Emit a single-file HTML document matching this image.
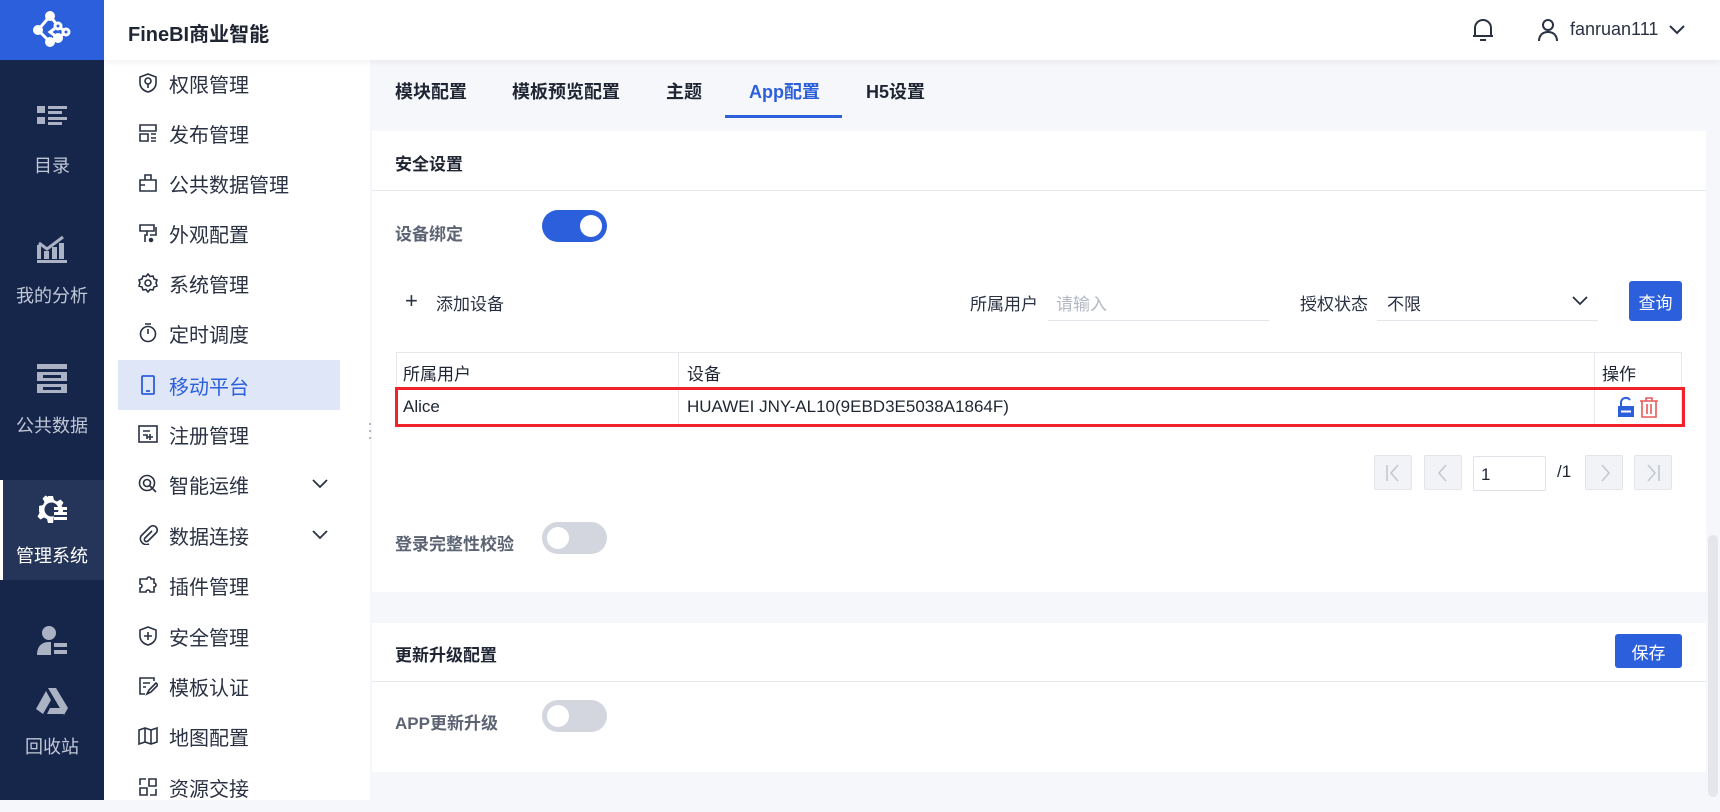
<!DOCTYPE html>
<html><head><meta charset="utf-8">
<style>
*{margin:0;padding:0;box-sizing:border-box}
body{width:1720px;height:800px;overflow:hidden;background:#f6f7fa;font-family:"Liberation Sans","Noto Sans CJK SC",sans-serif;color:#1f2533;position:relative}
.a{position:absolute}
.nav{left:0;top:0;width:104px;height:800px;background:#16254a}
.logo{left:0;top:0;width:104px;height:60px;background:#2b5fdc}
.ni{color:#c0c7d6;font-size:18px;width:104px;text-align:center}
.hdr{left:104px;top:0;width:1616px;height:60px;background:#fff;box-shadow:0 2px 6px rgba(0,0,0,.06);z-index:2}
.menu{left:104px;top:60px;width:266px;height:740px;background:#fff}
.mi{left:0;width:266px;height:50px;font-size:20px;color:#2a3142;display:flex;align-items:center}
.mi svg{position:absolute;left:34px}
.mi span{position:absolute;left:65px}
.tab{top:78px;font-size:18px;font-weight:bold;color:#1f2533}
.panel{background:#fff;left:372px;width:1334px}
.lbl{font-size:17px;color:#5c6373;font-weight:bold}
.tg{width:65px;height:32px;border-radius:16px;background:#d3d6de}
.tg::after{content:"";position:absolute;left:5px;top:5px;width:22px;height:22px;border-radius:50%;background:#fff}
.tg.on{background:#2b5fdc}.tg.on::after{left:38px}
.btn{background:#2b5fdc;color:#fff;font-size:17px;border-radius:3px;display:flex;align-items:center;justify-content:center}
.pg{width:38px;height:35px;border:1px solid #e3e5ea;background:#f1f3f6;border-radius:2px}
.t17{font-size:17px}
</style></head><body>
<div class="a nav"></div>
<div class="a logo"><svg class="a" style="left:30px;top:8px" width="44" height="44" viewBox="0 0 44 44" fill="none" stroke="#fff" stroke-width="3"><path d="M20 8 L8 22 L20 34 M20 8 L28 18 L20 24 L28 30 M28 18 L36 24 L28 30"/><circle cx="20" cy="8" r="3.5" fill="#fff"/><circle cx="8" cy="22" r="3.5" fill="#fff"/><circle cx="20" cy="34" r="3.5" fill="#fff"/><circle cx="28" cy="18" r="3" fill="#2b5fdc"/><circle cx="36" cy="24" r="3" fill="#2b5fdc"/><circle cx="28" cy="30" r="3.5" fill="#fff"/></svg></div>
<svg class="a" style="left:37px;top:106px" width="30" height="26" viewBox="0 0 30 26" fill="#aab2c3"><rect x="0" y="0" width="8" height="7"/><rect x="11" y="0" width="19" height="3"/><rect x="11" y="5" width="14" height="3"/><rect x="0" y="11" width="8" height="7"/><rect x="11" y="11" width="19" height="3"/><rect x="11" y="16" width="14" height="3"/></svg>
<div class="a ni" style="top:152px">目录</div>
<svg class="a" style="left:37px;top:235px" width="30" height="28" viewBox="0 0 30 28" fill="#aab2c3"><path d="M0 10h4v14H0zM7 16h5v8H7zM15 12h5v12h-5zM22 8h5v16h-5zM0 25h30v3H0z"/><path d="M2 8l8 6 8-6 8-6" stroke="#aab2c3" stroke-width="3" fill="none"/></svg>
<div class="a ni" style="top:282px">我的分析</div>
<svg class="a" style="left:37px;top:364px" width="30" height="30" viewBox="0 0 30 30" fill="#aab2c3"><rect x="0" y="0" width="30" height="5"/><rect x="0" y="8" width="30" height="9"/><rect x="0" y="20" width="30" height="9"/><rect x="6" y="11" width="18" height="3" fill="#16254a"/><rect x="6" y="23" width="18" height="3" fill="#16254a"/></svg>
<div class="a ni" style="top:412px">公共数据</div>
<div class="a" style="left:0;top:480px;width:104px;height:100px;background:#253559;border-left:3px solid #fff"></div>
<svg class="a" style="left:37px;top:495px" width="30" height="30" viewBox="0 0 30 30" fill="#fff"><path d="M11 1h5l1 4 3 1.5 3.5-2 3 3-2 3.5L26 13v4h-5a7 7 0 10-4 4v-1l-1 8h-5l-1-4-3-1.5-3.5 2-3-3 2-3.5L2 16v-5l4-1 1.5-3-2-3.5 3-3 3.5 2L11 3z"/><rect x="17" y="12" width="13" height="3"/><rect x="17" y="17" width="13" height="3"/><rect x="17" y="22" width="13" height="3"/></svg>
<div class="a ni" style="top:542px;color:#fff">管理系统</div>
<svg class="a" style="left:37px;top:625px" width="30" height="30" viewBox="0 0 30 30" fill="#aab2c3"><circle cx="12" cy="8" r="7"/><path d="M0 30c0-9 5-13 12-13h2v13z"/><rect x="17" y="18" width="13" height="4"/><rect x="17" y="25" width="13" height="4"/></svg>
<svg class="a" style="left:36px;top:688px" width="32" height="28" viewBox="0 0 32 28" fill="#aab2c3"><path d="M12 0h8l12 20-4 7zM10 3l5 9-8 14-7-5z"/><path d="M14 20h16l-3 6H11z"/></svg>
<div class="a ni" style="top:733px">回收站</div>

<div class="a hdr">
<div class="a" style="left:24px;top:18px;font-size:20px;font-weight:bold">FineBI商业智能</div>
<svg class="a" style="left:1368px;top:18px" width="22" height="24" viewBox="0 0 22 24" fill="none" stroke="#2a3142" stroke-width="2"><path d="M3 18V10a8 8 0 0116 0v8zM1 18h20M8 22h6"/></svg>
<svg class="a" style="left:1434px;top:19px" width="20" height="22" viewBox="0 0 20 22" fill="none" stroke="#2a3142" stroke-width="2"><circle cx="10" cy="6" r="5"/><path d="M1 22c0-6 4-9 9-9s9 3 9 9"/></svg>
<div class="a" style="left:1466px;top:19px;font-size:18px;color:#2a3142">fanruan111</div>
<svg class="a" style="left:1564px;top:24px" width="18" height="12" viewBox="0 0 18 12" fill="none" stroke="#2a3142" stroke-width="2"><path d="M2 2l7 7 7-7"/></svg>
</div>

<div class="a menu">
<div class="a" style="left:14px;top:300px;width:222px;height:50px;background:#dfe6f8"></div>
<div class="a mi" style="top:-2px"><svg width="20" height="20" viewBox="0 0 20 20" fill="none" stroke="#2a3142" stroke-width="1.6"><path d="M10 1l8 3v6c0 5-4 8-8 9-4-1-8-4-8-9V4z"/><circle cx="10" cy="8" r="3"/><path d="M10 11v4"/></svg><span>权限管理</span></div>
<div class="a mi" style="top:48px"><svg width="20" height="20" viewBox="0 0 20 20" fill="none" stroke="#2a3142" stroke-width="1.6"><path d="M2 2h16v6H2zM2 11h8v7H2zM13 11h5M13 15h5M13 18h5"/></svg><span>发布管理</span></div>
<div class="a mi" style="top:98px"><svg width="20" height="20" viewBox="0 0 20 20" fill="none" stroke="#2a3142" stroke-width="1.6"><path d="M2 7h16v11H2zM7 7V2h6v5M2 12h5"/></svg><span>公共数据管理</span></div>
<div class="a mi" style="top:148px"><svg width="20" height="20" viewBox="0 0 20 20" fill="none" stroke="#2a3142" stroke-width="1.6"><path d="M2 2h14v6H2zM9 8v4H7v7M18 4v8h-6"/><circle cx="13" cy="17" r="1.5" fill="#2a3142"/></svg><span>外观配置</span></div>
<div class="a mi" style="top:198px"><svg width="20" height="20" viewBox="0 0 20 20" fill="none" stroke="#2a3142" stroke-width="1.6"><path d="M10 1l2 2.5 3-.5 1 3 3 1-1 3 1 3-3 1-1 3-3-.5L10 19l-2-2.5-3 .5-1-3-3-1 1-3-1-3 3-1 1-3 3 .5z"/><circle cx="10" cy="10" r="3"/></svg><span>系统管理</span></div>
<div class="a mi" style="top:248px"><svg width="20" height="20" viewBox="0 0 20 20" fill="none" stroke="#2a3142" stroke-width="1.6"><circle cx="10" cy="11" r="7.5"/><path d="M7 1h6M10 6v5"/></svg><span>定时调度</span></div>
<div class="a mi" style="top:300px;color:#2b5fdc"><svg width="20" height="20" viewBox="0 0 20 20" fill="none" stroke="#2b5fdc" stroke-width="1.8"><rect x="4" y="1" width="12" height="18" rx="1"/><path d="M8 16h4"/></svg><span>移动平台</span></div>
<div class="a mi" style="top:349px"><svg width="20" height="20" viewBox="0 0 20 20" fill="none" stroke="#2a3142" stroke-width="1.6"><rect x="1" y="2" width="18" height="16"/><path d="M5 7h7M5 11h4v4M12 10v6M9 13h6"/></svg><span>注册管理</span></div>
<div class="a mi" style="top:399px"><svg width="20" height="20" viewBox="0 0 20 20" fill="none" stroke="#2a3142" stroke-width="1.6"><circle cx="9" cy="9" r="7.5"/><circle cx="9" cy="9" r="3.5"/><path d="M11 11l7 7"/></svg><span>智能运维</span><svg style="left:208px" width="16" height="10" viewBox="0 0 16 10" fill="none" stroke="#2a3142" stroke-width="1.8"><path d="M1 1l7 7 7-7"/></svg></div>
<div class="a mi" style="top:450px"><svg width="20" height="20" viewBox="0 0 20 20" fill="none" stroke="#2a3142" stroke-width="1.6"><path d="M14 6l-7 7a2 2 0 003 3l8-8a4 4 0 00-6-6L3 11a6 6 0 008 8"/></svg><span>数据连接</span><svg style="left:208px" width="16" height="10" viewBox="0 0 16 10" fill="none" stroke="#2a3142" stroke-width="1.8"><path d="M1 1l7 7 7-7"/></svg></div>
<div class="a mi" style="top:500px"><svg width="20" height="20" viewBox="0 0 20 20" fill="none" stroke="#2a3142" stroke-width="1.6"><path d="M6 4h3a2 2 0 014 0h3v4a2 2 0 010 4v5H12a2 2 0 00-4 0H2v-4a2 2 0 000-4V4z"/></svg><span>插件管理</span></div>
<div class="a mi" style="top:551px"><svg width="20" height="20" viewBox="0 0 20 20" fill="none" stroke="#2a3142" stroke-width="1.6"><path d="M10 1l8 3v6c0 5-4 8-8 9-4-1-8-4-8-9V4z"/><path d="M6 10h8M10 6v8"/></svg><span>安全管理</span></div>
<div class="a mi" style="top:601px"><svg width="20" height="20" viewBox="0 0 20 20" fill="none" stroke="#2a3142" stroke-width="1.6"><path d="M16 5V2H2v16h5M5 7h7M5 11h3"/><path d="M9 18l2-4 7-7 2 2-7 7z"/></svg><span>模板认证</span></div>
<div class="a mi" style="top:651px"><svg width="20" height="20" viewBox="0 0 20 20" fill="none" stroke="#2a3142" stroke-width="1.6"><path d="M1 4l6-2 6 2 6-2v14l-6 2-6-2-6 2zM7 2v14M13 4v14"/></svg><span>地图配置</span></div>
<div class="a mi" style="top:702px"><svg width="20" height="20" viewBox="0 0 20 20" fill="none" stroke="#2a3142" stroke-width="1.6"><path d="M11 2h7v7h-7zM2 11h7v7H2zM2 8V2h6M18 12v6h-6"/></svg><span>资源交接</span></div>
</div>

<svg class="a" style="left:368px;top:422px" width="10" height="18" viewBox="0 0 10 18" fill="#9aa0ad"><circle cx="2" cy="2" r="1"/><circle cx="8" cy="2" r="1"/><circle cx="2" cy="9" r="1"/><circle cx="8" cy="9" r="1"/><circle cx="2" cy="16" r="1"/><circle cx="8" cy="16" r="1"/></svg>

<div class="a tab" style="left:395px">模块配置</div>
<div class="a tab" style="left:512px">模板预览配置</div>
<div class="a tab" style="left:666px">主题</div>
<div class="a tab" style="left:749px;color:#2b5fdc">App配置</div>
<div class="a tab" style="left:866px">H5设置</div>
<div class="a" style="left:725px;top:115px;width:117px;height:3px;background:#2b5fdc"></div>

<div class="a panel" style="top:131px;height:461px"></div>
<div class="a" style="left:395px;top:150px;font-size:17px;font-weight:bold">安全设置</div>
<div class="a" style="left:372px;top:190px;width:1334px;height:1px;background:#e6e8ec"></div>
<div class="a lbl" style="left:395px;top:220px">设备绑定</div>
<div class="a tg on" style="left:542px;top:210px"></div>
<div class="a t17" style="left:405px;top:288px;font-size:22px;color:#2a3142">+</div>
<div class="a t17" style="left:436px;top:290px;color:#2a3142">添加设备</div>
<div class="a t17" style="left:970px;top:290px;color:#2a3142">所属用户</div>
<div class="a" style="left:1048px;top:282px;width:221px;height:39px;border-bottom:1px solid #e3e5ea"></div>
<div class="a t17" style="left:1056px;top:290px;color:#b3b8c3">请输入</div>
<div class="a t17" style="left:1300px;top:290px;color:#2a3142">授权状态</div>
<div class="a" style="left:1377px;top:282px;width:221px;height:39px;border-bottom:1px solid #e3e5ea"></div>
<div class="a t17" style="left:1387px;top:290px;color:#2a3142">不限</div>
<svg class="a" style="left:1572px;top:296px" width="16" height="10" viewBox="0 0 16 10" fill="none" stroke="#2a3142" stroke-width="1.8"><path d="M1 1l7 7 7-7"/></svg>
<div class="a btn" style="left:1629px;top:281px;width:53px;height:40px">查询</div>

<div class="a" style="left:396px;top:352px;width:1286px;height:75px;border:1px solid #e6e8ec"></div>
<div class="a" style="left:678px;top:352px;width:1px;height:75px;background:#e6e8ec"></div>
<div class="a" style="left:1594px;top:352px;width:1px;height:75px;background:#e6e8ec"></div>
<div class="a t17" style="left:403px;top:360px">所属用户</div>
<div class="a t17" style="left:687px;top:360px">设备</div>
<div class="a t17" style="left:1602px;top:360px">操作</div>
<div class="a" style="left:395px;top:387px;width:1290px;height:40px;border:3px solid #f0232b"></div>
<div class="a t17" style="left:403px;top:397px">Alice</div>
<div class="a t17" style="left:687px;top:397px">HUAWEI JNY-AL10(9EBD3E5038A1864F)</div>
<svg class="a" style="left:1617px;top:396px" width="18" height="22" viewBox="0 0 18 22" fill="none"><path d="M4 10V6a5 5 0 019-2" stroke="#2b5fdc" stroke-width="2"/><rect x="1" y="10" width="16" height="11" fill="#2b5fdc"/><rect x="4" y="14.5" width="10" height="2" fill="#fff"/></svg>
<svg class="a" style="left:1639px;top:396px" width="20" height="22" viewBox="0 0 20 22" fill="none" stroke="#e85a5a" stroke-width="1.6"><path d="M1 5h18M7 5V2h6v3M3 5v16h14V5M8 8v10M12 8v10"/></svg>

<div class="a pg" style="left:1374px;top:455px"></div>
<svg class="a" style="left:1385px;top:464px" width="16" height="18" viewBox="0 0 16 18" fill="none" stroke="#c4c8d0" stroke-width="1.6"><path d="M2 1v16M13 1L6 9l7 8"/></svg>
<div class="a pg" style="left:1424px;top:455px"></div>
<svg class="a" style="left:1437px;top:464px" width="12" height="18" viewBox="0 0 12 18" fill="none" stroke="#c4c8d0" stroke-width="1.6"><path d="M9 1L2 9l7 8"/></svg>
<div class="a" style="left:1473px;top:456px;width:73px;height:35px;border:1px solid #dfe2e8;border-radius:2px;background:#fff"></div>
<div class="a t17" style="left:1481px;top:465px;color:#1f2533">1</div>
<div class="a t17" style="left:1557px;top:462px;color:#1f2533">/1</div>
<div class="a pg" style="left:1585px;top:455px"></div>
<svg class="a" style="left:1599px;top:464px" width="12" height="18" viewBox="0 0 12 18" fill="none" stroke="#c4c8d0" stroke-width="1.6"><path d="M3 1l7 8-7 8"/></svg>
<div class="a pg" style="left:1634px;top:455px"></div>
<svg class="a" style="left:1645px;top:464px" width="16" height="18" viewBox="0 0 16 18" fill="none" stroke="#c4c8d0" stroke-width="1.6"><path d="M14 1v16M3 1l7 8-7 8"/></svg>

<div class="a lbl" style="left:395px;top:530px">登录完整性校验</div>
<div class="a tg" style="left:542px;top:522px"></div>

<div class="a panel" style="top:623px;height:149px"></div>
<div class="a" style="left:395px;top:641px;font-size:17px;font-weight:bold">更新升级配置</div>
<div class="a btn" style="left:1615px;top:634px;width:67px;height:34px">保存</div>
<div class="a" style="left:372px;top:681px;width:1334px;height:1px;background:#e6e8ec"></div>
<div class="a lbl" style="left:395px;top:709px">APP更新升级</div>
<div class="a tg" style="left:542px;top:700px"></div>

<div class="a" style="left:1708px;top:535px;width:10px;height:262px;border-radius:5px;background:#e4e6eb"></div>
</body></html>
